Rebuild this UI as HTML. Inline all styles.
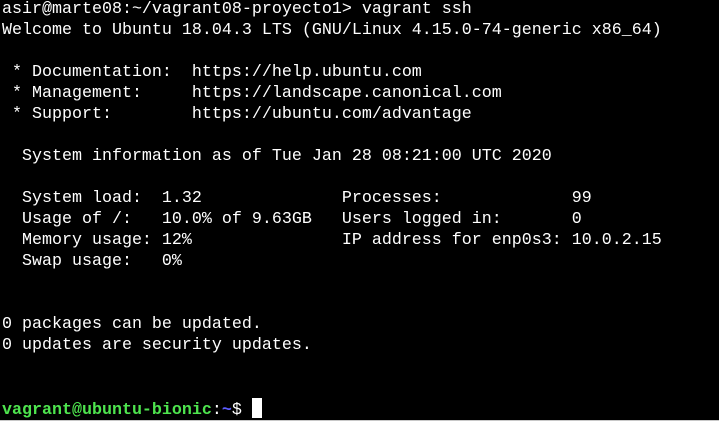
<!DOCTYPE html>
<html><head><meta charset="utf-8"><style>
html,body{margin:0;padding:0;background:#000;width:719px;height:421px;overflow:hidden;}
body{position:relative;}
pre{margin:0;position:absolute;left:2px;top:-1px;font-family:"Liberation Mono","DejaVu Sans Mono",monospace;font-size:16.67px;line-height:21px;color:#fff;white-space:pre;}
.g{color:#4ee44e;font-weight:bold;}
.b{color:#5c5cff;font-weight:bold;}
.cur{display:inline-block;width:10px;height:20px;background:#fff;vertical-align:-4px;}
.bot{position:absolute;left:0;top:420px;width:719px;height:1px;background:#c8c8c8;}
</style></head><body>
<pre>asir@marte08:~/vagrant08-proyecto1&gt; vagrant ssh
Welcome to Ubuntu 18.04.3 LTS (GNU/Linux 4.15.0-74-generic x86_64)

 * Documentation:  https://help.ubuntu.com
 * Management:     https://landscape.canonical.com
 * Support:        https://ubuntu.com/advantage

  System information as of Tue Jan 28 08:21:00 UTC 2020

  System load:  1.32              Processes:             99
  Usage of /:   10.0% of 9.63GB   Users logged in:       0
  Memory usage: 12%               IP address for enp0s3: 10.0.2.15
  Swap usage:   0%


0 packages can be updated.
0 updates are security updates.


<span class="g">vagrant@ubuntu-bionic</span>:<span class="b">~</span>$ <span class="cur"></span></pre>
<div class="bot"></div>
</body></html>
